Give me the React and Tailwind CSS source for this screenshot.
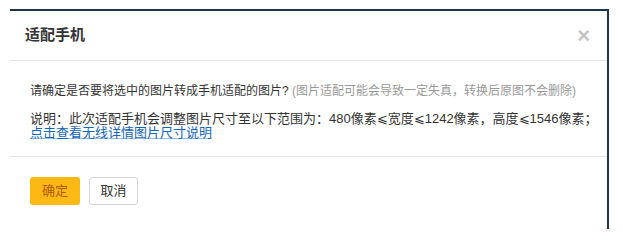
import React from 'react';

const font = { fontFamily: '"Liberation Sans", "Noto Sans CJK SC", sans-serif' };

const App = () => {
  return (
    <div className="w-[623px] h-[233px] bg-white pt-[9px] pl-[10px] overflow-hidden" style={font}>
      {/*-------dialog-------*/}
      <div className="w-[599px] h-[220px] bg-white border-t-2 border-r-2 border-[#1f3547]">
        {/*-------header-------*/}
        <div className="h-[50px] flex items-center justify-between pl-[15px] pr-[17px] border-b border-[#e5e5e5]">
          <p className="text-[15px] font-bold text-[#333]">适配手机</p>
          <span className="text-[22px] leading-none text-[#c4c4c4] font-bold">×</span>
        </div>
        {/*-------body-------*/}
        <div className="h-[96px] pl-[20px] pt-[21px] text-[#333] border-b border-[#e5e5e5]">
          <p className="text-[12px] leading-[18px]">
            请确定是否要将选中的图片转成手机适配的图片?
            <span className="text-[#999]"> (图片适配可能会导致一定失真，转换后原图不会删除)</span>
          </p>
          <p className="mt-[12px] text-[13px] leading-[14px]">
            说明：此次适配手机会调整图片尺寸至以下范围为：480像素⩽宽度⩽1242像素，高度⩽1546像素；
          </p>
          <a className="block text-[13px] leading-[14px] text-[#1565b8] underline decoration-[#9bbfe3]">点击查看无线详情图片尺寸说明</a>
        </div>
        {/*-------footer-------*/}
        <div className="flex items-center gap-[9px] pl-[20px] pt-[20px]">
          <button className="w-[50px] h-[28px] rounded-[3px] bg-[#fdb913] text-[#b1590c] text-[13px]">确定</button>
          <button className="w-[49px] h-[28px] rounded-[3px] bg-white border border-[#d5d5d5] text-[#333] text-[13px]">取消</button>
        </div>
      </div>
    </div>
  );
};

export default App;
